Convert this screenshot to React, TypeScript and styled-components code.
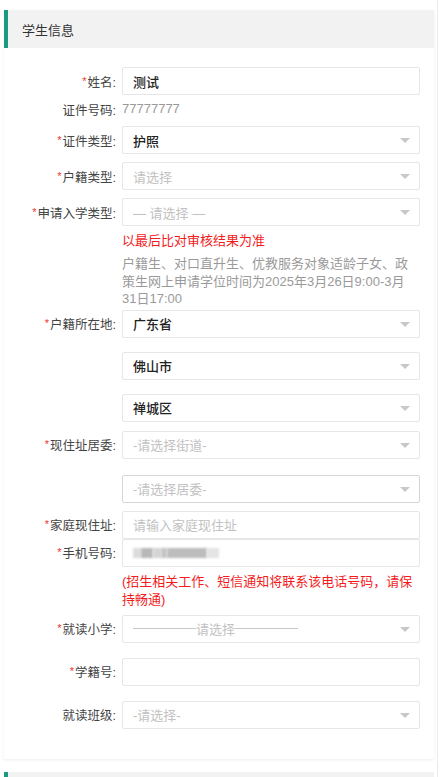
import React from "react";
import styled, { createGlobalStyle } from "styled-components";

const Global = createGlobalStyle`
  html, body { margin: 0; padding: 0; background: #fff; }
  body { font-family: "Liberation Sans", "Noto Sans CJK SC", sans-serif; }
  * { box-sizing: border-box; }
`;

const Page = styled.div`
  width: 438px;
  min-height: 777px;
  border-right: 1px solid #ececec;
  padding-top: 10px;
  overflow: hidden;
`;

const Card = styled.section`
  margin-left: 4px;
  width: 430px;
  background: #fff;
  box-shadow: 0 1px 3px rgba(0, 0, 0, 0.07);
  padding-bottom: 30px;
`;

const NextCard = styled.section`
  margin-left: 4px;
  margin-top: 13px;
  width: 430px;
  height: 40px;
  background: #f2f2f2;
  border-left: 4px solid #1b9a82;
`;

const Header = styled.div`
  height: 38px;
  background: #f2f2f2;
  border-left: 4px solid #1b9a82;
  display: flex;
  align-items: center;
  padding-left: 14px;
  font-size: 13px;
  color: #333;
`;

const Body = styled.div`
  padding-top: 19px;
`;

const Row = styled.div<{ $mt?: number }>`
  display: flex;
  align-items: center;
  margin-top: ${(p) => p.$mt ?? 0}px;
  gap: 6px;
`;

const Label = styled.div`
  width: 112px;
  flex: none;
  text-align: right;
  font-size: 12.5px;
  color: #444;
  white-space: nowrap;
`;

const Star = styled.span`
  color: #e33;
  font-size: 11px;
  margin-right: 1px;
  position: relative;
  top: -2px;
`;

const Box = styled.div<{ $dark?: boolean }>`
  width: 298px;
  height: 28px;
  border: 1px solid ${(p) => (p.$dark ? "#d6d6d6" : "#e6e6e6")};
  border-radius: 2px;
  background: #fff;
  display: flex;
  align-items: center;
  padding: 0 10px;
  position: relative;
  font-size: 13px;
`;

const Value = styled.span`
  color: #222;
  font-weight: 500;
`;

const Placeholder = styled.span`
  color: #c2c2c2;
  display: inline-flex;
  align-items: center;
`;

const Arrow = styled.span`
  position: absolute;
  right: 9px;
  top: 50%;
  margin-top: -2px;
  width: 0;
  height: 0;
  border-left: 5px solid transparent;
  border-right: 5px solid transparent;
  border-top: 5px solid #c8c8c8;
`;

const PlainValue = styled.span`
  font-size: 13px;
  color: #9a9a9a;
  line-height: 20px;
`;

const Note = styled.div<{ $mt?: number; $red?: boolean }>`
  margin-left: 118px;
  width: ${(p) => (p.$red ? 298 : 292)}px;
  margin-top: ${(p) => p.$mt ?? 0}px;
  font-size: 13px;
  line-height: ${(p) => (p.$red ? 18 : 17.5)}px;
  color: ${(p) => (p.$red ? "#f21c1c" : "#9a9a9a")};
`;

const DashLine = styled.span`
  display: inline-block;
  width: 63px;
  height: 1px;
  background: #c8c8c8;
`;

const Blur = styled.span<{ $w: number; $c: string }>`
  display: inline-block;
  width: ${(p) => p.$w}px;
  height: 10px;
  background: ${(p) => p.$c};
  filter: blur(1px);
`;

const BlurGroup = styled.span`
  display: flex;
  align-items: center;
`;

type SelectProps = { value?: string; placeholder?: React.ReactNode; dark?: boolean };
const Select = ({ value, placeholder, dark }: SelectProps) => (
  <Box $dark={dark}>
    {value ? <Value>{value}</Value> : <Placeholder>{placeholder}</Placeholder>}
    <Arrow />
  </Box>
);

const L = ({ text, req = true }: { text: string; req?: boolean }) => (
  <Label>
    {req && <Star>*</Star>}
    {text}:
  </Label>
);

export default function App() {
  return (
    <>
      <Global />
      <Page>
        <Card>
          <Header>学生信息</Header>
          <Body>
            <Row>
              <L text="姓名" />
              <Box>
                <Value>测试</Value>
              </Box>
            </Row>
            <Row $mt={4}>
              <L text="证件号码" req={false} />
              <PlainValue>77777777</PlainValue>
            </Row>
            <Row $mt={7}>
              <L text="证件类型" />
              <Select value="护照" />
            </Row>
            <Row $mt={8}>
              <L text="户籍类型" />
              <Select placeholder="请选择" />
            </Row>
            <Row $mt={8}>
              <L text="申请入学类型" />
              <Select placeholder="— 请选择 —" />
            </Row>
            <Note $red $mt={6}>以最后比对审核结果为准</Note>
            <Note $mt={5}>
              户籍生、对口直升生、优教服务对象适龄子女、政策生网上申请学位时间为2025年3月26日9:00-3月31日17:00
            </Note>
            <Row $mt={2}>
              <L text="户籍所在地" />
              <Select value="广东省" />
            </Row>
            <Row $mt={14}>
              <Label />
              <Select value="佛山市" />
            </Row>
            <Row $mt={14}>
              <Label />
              <Select value="禅城区" />
            </Row>
            <Row $mt={9}>
              <L text="现住址居委" />
              <Select placeholder="-请选择街道-" />
            </Row>
            <Row $mt={16}>
              <Label />
              <Select placeholder="-请选择居委-" dark />
            </Row>
            <Row $mt={8}>
              <L text="家庭现住址" />
              <Box>
                <Placeholder>请输入家庭现住址</Placeholder>
              </Box>
            </Row>
            <Row $mt={0}>
              <L text="手机号码" />
              <Box>
                <BlurGroup>
                  <Blur $w={8} $c="#dcdcdc" />
                  <Blur $w={12} $c="#b8b8b8" />
                  <Blur $w={8} $c="#d4d4d4" />
                  <Blur $w={6} $c="#c4c4c4" />
                  <Blur $w={40} $c="#bdbdbd" />
                  <Blur $w={12} $c="#e4e4e4" />
                </BlurGroup>
              </Box>
            </Row>
            <Note $red $mt={6}>(招生相关工作、短信通知将联系该电话号码，请保持畅通)</Note>
            <Row $mt={6}>
              <L text="就读小学" />
              <Box>
                <Placeholder>
                  <DashLine />
                  请选择
                  <DashLine />
                </Placeholder>
                <Arrow />
              </Box>
            </Row>
            <Row $mt={15}>
              <L text="学籍号" />
              <Box />
            </Row>
            <Row $mt={15}>
              <L text="就读班级" req={false} />
              <Select placeholder="-请选择-" />
            </Row>
          </Body>
        </Card>
        <NextCard />
      </Page>
    </>
  );
}
